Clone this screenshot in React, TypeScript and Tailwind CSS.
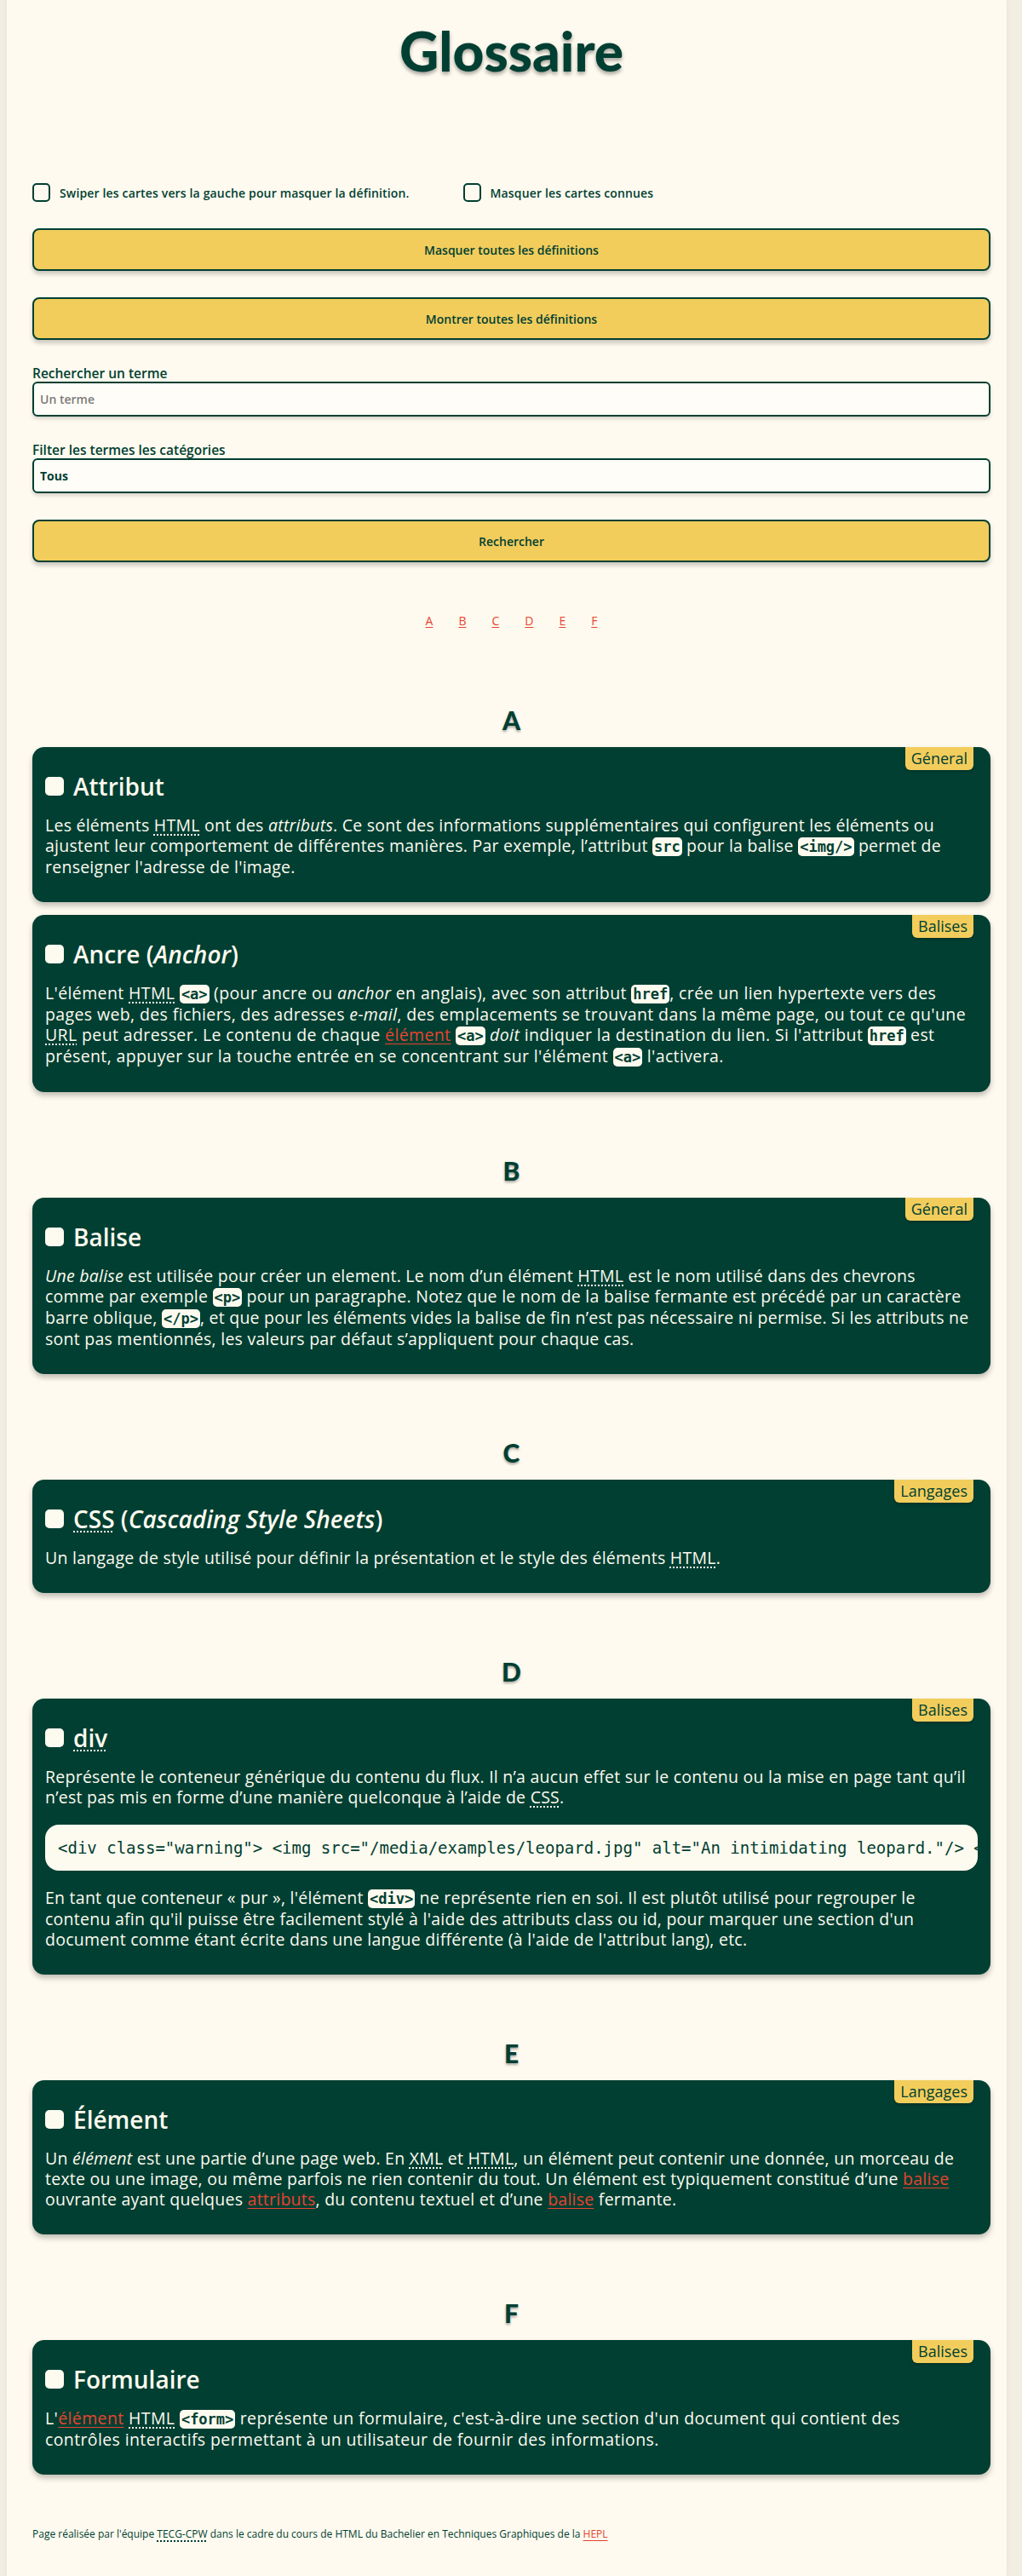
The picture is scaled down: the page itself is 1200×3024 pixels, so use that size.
import React from 'react';

function Abbr({ children }: { children: React.ReactNode }) {
  return (
    <abbr className="underline decoration-dotted decoration-[1.5px] underline-offset-[3px]">
      {children}
    </abbr>
  );
}

function Code({ children }: { children: React.ReactNode }) {
  return (
    <code className="rounded-[5px] bg-[#fdfaef] px-[2px] py-[1px] font-['DejaVu_Sans_Mono',monospace] text-[17px] font-bold tracking-normal text-[#003f32]">
      {children}
    </code>
  );
}

function Link({ children }: { children: React.ReactNode }) {
  return (
    <a href="#" className="text-[#e8432e] underline underline-offset-[3px]">
      {children}
    </a>
  );
}

function Card({
  title,
  category,
  children,
}: {
  title: React.ReactNode;
  category: string;
  children: React.ReactNode;
}) {
  return (
    <article className="relative rounded-[14px] bg-[#003f32] px-[15px] pt-[29px] pb-[29px] text-[#fdfaef] shadow-[0_4px_6px_rgba(0,0,0,0.25)]">
      <span className="absolute right-[20px] top-0 h-[27px] rounded-b-[6px] bg-[#f2cd5c] px-[7px] text-[18px] leading-[27px] text-[#003f32] shadow-[0_2px_3px_rgba(0,0,0,0.2)]">
        {category}
      </span>
      <h3 className="mb-[17px] flex items-center gap-[11px] text-[28px] font-semibold leading-[34px]">
        <span className="h-[22px] w-[22px] shrink-0 rounded-[5px] bg-[#fdfaef]" />
        <span>{title}</span>
      </h3>
      <div className="space-y-[20px] text-[19.5px] leading-[24px] tracking-[0.25px]">{children}</div>
    </article>
  );
}

function Section({
  letter,
  first,
  children,
}: {
  letter: string;
  first?: boolean;
  children: React.ReactNode;
}) {
  return (
    <section className={first ? 'mt-[88px]' : 'mt-[74px]'}>
      <h2 className="mb-[14px] text-center font-['Lato',sans-serif] text-[30px] font-black leading-[36px] text-[#003f32] [text-shadow:0_2px_3px_rgba(0,0,0,0.35)]">
        {letter}
      </h2>
      <div className="space-y-[15px]">{children}</div>
    </section>
  );
}

const button =
  'block h-[50px] w-full rounded-[8px] border-2 border-[#003f32] bg-[#f2cd5c] text-[14px] font-semibold text-[#003f32] shadow-[0_4px_5px_rgba(0,0,0,0.2)]';

export default function App() {
  return (
    <div className="min-h-[3024px] bg-[#f3eee2] pl-[8px] pr-[18px] font-['Open_Sans','Noto_Sans',sans-serif]">
      <div className="min-h-[3024px] bg-[#fefaef] pl-[30px] pr-[19px] pt-[22px] pb-[40px] shadow-[0_0_6px_rgba(0,0,0,0.06)]">
        <h1 className="text-center font-['Lato',sans-serif] text-[64px] font-black leading-[76px] text-[#003f32] [text-shadow:0_3px_4px_rgba(0,0,0,0.35)]">
          Glossaire
        </h1>

        <div className="mt-[117px] flex items-center text-[14px] font-semibold tracking-[0.15px] text-[#003f32]">
          <label className="flex items-center gap-[11px]">
            <span className="h-[22px] w-[21px] rounded-[5px] border-2 border-[#003f32] bg-[#fefaef]" />
            Swiper les cartes vers la gauche pour masquer la définition.
          </label>
          <label className="ml-[63px] flex items-center gap-[11px]">
            <span className="h-[22px] w-[21px] rounded-[5px] border-2 border-[#003f32] bg-[#fefaef]" />
            Masquer les cartes connues
          </label>
        </div>

        <button className={`mt-[31px] ${button}`}>Masquer toutes les définitions</button>
        <button className={`mt-[31px] ${button}`}>Montrer toutes les définitions</button>

        <label className="mt-[30px] block text-[15.5px] font-semibold leading-[18px] text-[#003f32]">
          Rechercher un terme
        </label>
        <input
          placeholder="Un terme"
          className="mt-[1px] block h-[41px] w-full rounded-[6px] border-2 border-[#003f32] bg-[#fffdf7] px-[7px] text-[14px] font-semibold text-[#003f32] shadow-[0_3px_4px_rgba(0,0,0,0.15)] placeholder:text-[#7a7a7a]"
        />

        <label className="mt-[30px] block text-[15.5px] font-semibold leading-[18px] text-[#003f32]">
          Filter les termes les catégories
        </label>
        <select className="mt-[1px] block h-[41px] w-full appearance-none rounded-[6px] border-2 border-[#003f32] bg-[#fffdf7] px-[7px] text-[14px] font-bold text-[#003f32] shadow-[0_3px_4px_rgba(0,0,0,0.15)]">
          <option>Tous</option>
        </select>

        <button className={`mt-[31px] ${button}`}>Rechercher</button>

        <nav className="mt-[59px] flex justify-center gap-[30px] text-[14px] leading-[20px] text-[#e8432e]">
          {['A', 'B', 'C', 'D', 'E', 'F'].map((l) => (
            <a key={l} href="#" className="underline underline-offset-[2px]">
              {l}
            </a>
          ))}
        </nav>

        <Section letter="A" first>
          <Card title="Attribut" category="Géneral">
            <p>
              Les éléments <Abbr>HTML</Abbr> ont des <em>attributs</em>. Ce sont des informations
              supplémentaires qui configurent les éléments ou ajustent leur comportement de
              différentes manières. Par exemple, l’attribut <Code>src</Code> pour la balise{' '}
              <Code>&lt;img/&gt;</Code> permet de renseigner l'adresse de l'image.
            </p>
          </Card>
          <Card
            title={
              <>
                Ancre (<em>Anchor</em>)
              </>
            }
            category="Balises"
          >
            <p className="tracking-[0.38px]">
              L'élément <Abbr>HTML</Abbr> <Code>&lt;a&gt;</Code> (pour ancre ou <em>anchor</em> en
              anglais), avec son attribut <Code>href</Code>, crée un lien hypertexte vers des pages
              web, des fichiers, des adresses <em>e-mail</em>, des emplacements se trouvant dans la
              même page, ou tout ce qu'une <Abbr>URL</Abbr> peut adresser. Le contenu de chaque{' '}
              <Link>élément</Link> <Code>&lt;a&gt;</Code> <em>doit</em> indiquer la destination du
              lien. Si l'attribut <Code>href</Code> est présent, appuyer sur la touche entrée en se
              concentrant sur l'élément <Code>&lt;a&gt;</Code> l'activera.
            </p>
          </Card>
        </Section>

        <Section letter="B">
          <Card title="Balise" category="Géneral">
            <p>
              <em>Une balise</em> est utilisée pour créer un element. Le nom d’un élément{' '}
              <Abbr>HTML</Abbr> est le nom utilisé dans des chevrons comme par exemple{' '}
              <Code>&lt;p&gt;</Code> pour un paragraphe. Notez que le nom de la balise fermante est
              précédé par un caractère barre oblique, <Code>&lt;/p&gt;</Code>, et que pour les
              éléments vides la balise de fin n’est pas nécessaire ni permise. Si les attributs ne
              sont pas mentionnés, les valeurs par défaut s’appliquent pour chaque cas.
            </p>
          </Card>
        </Section>

        <Section letter="C">
          <Card
            title={
              <>
                <Abbr>CSS</Abbr> (<em>Cascading Style Sheets</em>)
              </>
            }
            category="Langages"
          >
            <p>
              Un langage de style utilisé pour définir la présentation et le style des éléments{' '}
              <Abbr>HTML</Abbr>.
            </p>
          </Card>
        </Section>

        <Section letter="D">
          <Card title={<Abbr>div</Abbr>} category="Balises">
            <p>
              Représente le conteneur générique du contenu du flux. Il n’a aucun effet sur le
              contenu ou la mise en page tant qu’il n’est pas mis en forme d’une manière quelconque
              à l’aide de <Abbr>CSS</Abbr>.
            </p>
            <pre className="overflow-hidden rounded-[16px] bg-[#fdfaef] px-[15px] py-[15px] font-['DejaVu_Sans_Mono',monospace] text-[19px] leading-[24px] tracking-normal text-[#003f32]">
              {'<div class="warning"> <img src="/media/examples/leopard.jpg" alt="An intimidating leopard."/> </div>'}
            </pre>
            <p>
              En tant que conteneur « pur », l'élément <Code>&lt;div&gt;</Code> ne représente rien
              en soi. Il est plutôt utilisé pour regrouper le contenu afin qu'il puisse être
              facilement stylé à l'aide des attributs class ou id, pour marquer une section d'un
              document comme étant écrite dans une langue différente (à l'aide de l'attribut lang),
              etc.
            </p>
          </Card>
        </Section>

        <Section letter="E">
          <Card title="Élément" category="Langages">
            <p>
              Un <em>élément</em> est une partie d’une page web. En <Abbr>XML</Abbr> et{' '}
              <Abbr>HTML</Abbr>, un élément peut contenir une donnée, un morceau de texte ou une
              image, ou même parfois ne rien contenir du tout. Un élément est typiquement constitué
              d’une <Link>balise</Link> ouvrante ayant quelques <Link>attributs</Link>, du contenu
              textuel et d’une <Link>balise</Link> fermante.
            </p>
          </Card>
        </Section>

        <Section letter="F">
          <Card title="Formulaire" category="Balises">
            <p className="tracking-[0.38px]">
              L'<Link>élément</Link> <Abbr>HTML</Abbr> <Code>&lt;form&gt;</Code> représente un
              formulaire, c'est-à-dire une section d'un document qui contient des contrôles
              interactifs permettant à un utilisateur de fournir des informations.
            </p>
          </Card>
        </Section>

        <footer className="mt-[62px] text-[12px] leading-[16px] text-[#003f32]">
          Page réalisée par l'équipe <Abbr>TECG-CPW</Abbr> dans le cadre du cours de HTML du
          Bachelier en Techniques Graphiques de la <Link>HEPL</Link>
        </footer>
      </div>
    </div>
  );
}
